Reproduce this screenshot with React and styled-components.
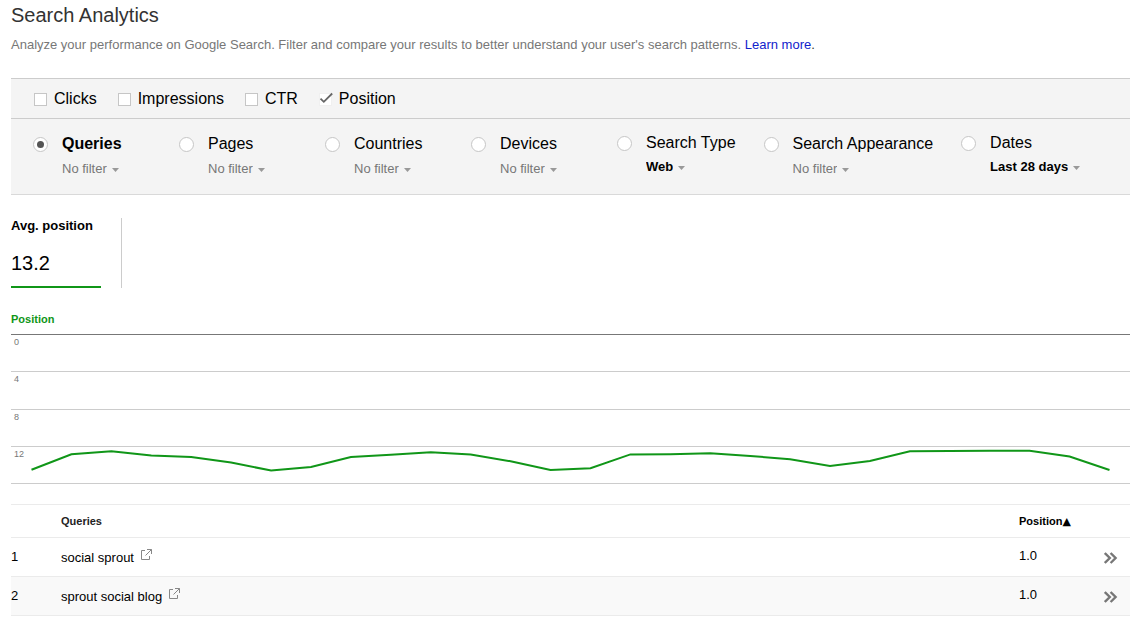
import React from 'react';
import styled, { createGlobalStyle } from 'styled-components';

const GlobalStyles = createGlobalStyle`
    *, *::before, *::after {
        box-sizing: border-box;
    }
    body {
        margin: 0;
        background: #fff;
        color: #000;
        font-family: 'Liberation Sans', Arial, Helvetica, sans-serif;
        font-size: 13px;
    }
    button, input, select {
        margin: 0;
        padding: 0;
        font-family: inherit;
    }
`;

const PageStyles = styled.main`
    padding: 3px 10px 9px 11px;
`;

const Title = styled.h1`
    margin: 0;
    color: #333;
    font-size: 20px;
    font-weight: normal;
    line-height: 24px;
`;

const Intro = styled.p`
    margin: 10px 0 25px;
    color: #777;
    line-height: 16px;
    a {
        color: #12c;
        text-decoration: none;
    }
    span {
        color: #333;
    }
`;

const FilterPanel = styled.form`
    background: #f4f4f4;
    border-top: 1px solid #ccc;
    border-bottom: 1px solid #d9d9d9;
`;

const MetricRow = styled.div`
    display: flex;
    flex-wrap: wrap;
    column-gap: 21px;
    padding: 10px 23px 9px;
    border-bottom: 1px solid #ccc;
`;

const MetricLabel = styled.label`
    display: flex;
    align-items: center;
    gap: 7px;
    font-size: 16px;
    line-height: 20px;
`;

const CheckWrap = styled.span`
    display: grid;
    input {
        grid-area: 1 / 1;
        appearance: none;
        width: 13px;
        height: 13px;
        background: #fff;
        border: 1px solid #c6c6c6;
    }
    input:checked {
        border-color: #f0f0f0;
    }
    svg {
        grid-area: 1 / 1;
        visibility: hidden;
        overflow: visible;
        pointer-events: none;
    }
    input:checked + svg {
        visibility: visible;
    }
`;

const DimensionRow = styled.div`
    display: flex;
    flex-wrap: wrap;
    min-height: 75px;
    padding: 0 0 16px 22px;
`;

const Dimension = styled.div`
    display: grid;
    grid-template-columns: 15px auto;
    justify-content: start;
    align-content: start;
    align-items: center;
    column-gap: 14px;
    row-gap: ${props => (props.$filtered ? '6px' : '7px')};
    min-width: 146px;
    padding-top: ${props => (props.$filtered ? '14px' : '15px')};
    padding-right: 28px;
    label {
        font-size: 16px;
        line-height: 20px;
        white-space: nowrap;
    }
    input:checked + label {
        font-weight: bold;
    }
`;

const Radio = styled.input`
    appearance: none;
    display: grid;
    place-items: center;
    width: 15px;
    height: 15px;
    background: #fff;
    border: 1px solid #c6c6c6;
    border-radius: 50%;
    &:checked::before {
        content: '';
        width: 7px;
        height: 7px;
        border-radius: 50%;
        background: #555;
    }
`;

const FilterSelect = styled.span`
    grid-column: 2;
    justify-self: start;
    display: grid;
    align-items: center;
    select {
        grid-area: 1 / 1;
        appearance: none;
        field-sizing: content;
        height: 16px;
        padding-right: 12px;
        background: none;
        border: 0;
        color: ${props => (props.$filtered ? '#000' : '#777')};
        font-size: 13px;
        font-weight: ${props => (props.$filtered ? 'bold' : 'normal')};
        line-height: 16px;
    }
    svg {
        grid-area: 1 / 1;
        justify-self: end;
        margin-top: 2px;
        pointer-events: none;
    }
`;

const Summary = styled.section`
    display: inline-block;
    margin-top: 23px;
    padding-right: 20px;
    border-right: 1px solid #ccc;
    h2 {
        margin: 0;
        font-size: 13px;
        line-height: 16px;
    }
    p {
        width: 90px;
        margin: 0;
        padding: 18px 0 12px;
        border-bottom: 2px solid #109618;
        font-size: 20px;
        line-height: 22px;
    }
`;

const ChartTitle = styled.h2`
    margin: 24px 0 8px;
    color: #109618;
    font-size: 11px;
    line-height: 14px;
`;

const Chart = styled.div`
    position: relative;
    display: flex;
    flex-direction: column;
    height: 150px;
    border-bottom: 1px solid #ccc;
    svg {
        position: absolute;
        inset: 0;
        width: 100%;
        height: 100%;
        overflow: visible;
    }
`;

const Band = styled.div`
    flex: 1 0 0;
    padding: 1px 3px 0;
    border-top: 1px solid #ccc;
    color: #777;
    font-size: 9px;
    line-height: 12px;
    &:first-child {
        border-top-color: #777;
    }
`;

const QueryTable = styled.table`
    width: 100%;
    margin-top: 20px;
    border-collapse: separate;
    border-spacing: 0;
    border-top: 1px solid #ebebeb;
    table-layout: fixed;
    th, td {
        padding: 0;
        border-bottom: 1px solid #ebebeb;
        text-align: left;
        line-height: 16px;
    }
    th {
        height: 33px;
        color: #222;
        font-size: 11px;
    }
    td {
        height: 39px;
    }
    tbody tr:nth-child(even) {
        background: #f9f9f9;
    }
    .rank {
        width: 50px;
    }
    .position {
        width: 85px;
    }
    .open {
        width: 26px;
    }
    td.position {
        padding-bottom: 2px;
    }
`;

const SortButton = styled.button`
    display: block;
    background: none;
    border: 0;
    color: #000;
    font-size: 11px;
    font-weight: bold;
    line-height: 16px;
    white-space: nowrap;
    span {
        font-family: 'DejaVu Sans', sans-serif;
        font-weight: normal;
        line-height: 1;
    }
`;

const IconLink = styled.a`
    display: inline-block;
    margin-left: 7px;
    vertical-align: 2px;
    line-height: 0;
`;

const OpenButton = styled.button`
    display: block;
    height: 14px;
    margin-top: 2px;
    background: none;
    border: 0;
    svg {
        display: block;
    }
`;

const metrics = [
    { name: 'Clicks' },
    { name: 'Impressions' },
    { name: 'CTR' },
    { name: 'Position', checked: true },
];

const dimensions = [
    { name: 'Queries', filter: 'No filter', checked: true },
    { name: 'Pages', filter: 'No filter' },
    { name: 'Countries', filter: 'No filter' },
    { name: 'Devices', filter: 'No filter' },
    { name: 'Search Type', filter: 'Web', filtered: true },
    { name: 'Search Appearance', filter: 'No filter' },
    { name: 'Dates', filter: 'Last 28 days', filtered: true },
];

const queries = [
    { query: 'social sprout', position: '1.0' },
    { query: 'sprout social blog', position: '1.0' },
];

// average position for each of the last 28 days
const positions = [
    14.58, 12.92, 12.6, 13.06, 13.21, 13.8, 14.67, 14.28, 13.21, 12.97,
    12.69, 12.94, 13.67, 14.61, 14.41, 12.93, 12.91, 12.8, 13.1, 13.44,
    14.17, 13.64, 12.58, 12.57, 12.54, 12.53, 13.15, 14.6,
];

const axisLabels = [0, 4, 8, 12];
const axisMax = 16;

function PositionChart() {
    const points = positions
        .map((value, i) => {
            const x = 20.5 + (i * 1078) / (positions.length - 1);
            return `${x.toFixed(1)},${((value / axisMax) * 149).toFixed(1)}`;
        })
        .join(' ');

    return (
        <Chart>
            {axisLabels.map(label => (
                <Band key={label}>{label}</Band>
            ))}
            <svg viewBox='0 0 1119 149' preserveAspectRatio='none' role='img' aria-label='Position'>
                <polyline
                    points={points}
                    fill='none'
                    stroke='#109618'
                    strokeWidth='2'
                    vectorEffect='non-scaling-stroke'
                />
            </svg>
        </Chart>
    );
}

export default function App() {
    return (
        <>
            <GlobalStyles />
            <PageStyles>
                <Title>Search Analytics</Title>
                <Intro>
                    Analyze your performance on Google Search. Filter and compare your results to better understand
                    your user's search patterns. <a href='#learn'>Learn more</a><span>.</span>
                </Intro>
                <FilterPanel>
                    <MetricRow>
                        {metrics.map(({ name, checked }) => (
                            <MetricLabel key={name}>
                                <CheckWrap>
                                    <input type='checkbox' defaultChecked={checked} />
                                    <svg width='13' height='13' viewBox='0 0 13 13'>
                                        <path d='M1.5 5.7 4.8 8.8 13.2.5' fill='none' stroke='#666' strokeWidth='1.8' />
                                    </svg>
                                </CheckWrap>
                                {name}
                            </MetricLabel>
                        ))}
                    </MetricRow>
                    <DimensionRow>
                        {dimensions.map(({ name, filter, checked, filtered }, i) => (
                            <Dimension key={name} $filtered={filtered}>
                                <Radio type='radio' name='dimension' id={`dimension-${i}`} defaultChecked={checked} />
                                <label htmlFor={`dimension-${i}`}>{name}</label>
                                <FilterSelect $filtered={filtered}>
                                    <select aria-label={`${name} filter`}>
                                        <option>{filter}</option>
                                    </select>
                                    <svg width='7' height='4' viewBox='0 0 7 4'>
                                        <path d='M0 0h7L3.5 4z' fill='#999' />
                                    </svg>
                                </FilterSelect>
                            </Dimension>
                        ))}
                    </DimensionRow>
                </FilterPanel>
                <Summary>
                    <h2>Avg. position</h2>
                    <p>13.2</p>
                </Summary>
                <ChartTitle>Position</ChartTitle>
                <PositionChart />
                <QueryTable>
                    <thead>
                        <tr>
                            <th className='rank' />
                            <th>Queries</th>
                            <th className='position'>
                                <SortButton type='button'>Position<span>▲</span></SortButton>
                            </th>
                            <th className='open' />
                        </tr>
                    </thead>
                    <tbody>
                        {queries.map(({ query, position }, i) => (
                            <tr key={query}>
                                <td className='rank'>{i + 1}</td>
                                <td>
                                    {query}
                                    <IconLink href='#search' aria-label={`Search for ${query}`}>
                                        <svg width='11' height='11' viewBox='0 0 11 11' fill='none' stroke='#888'>
                                            <path d='M4 1.5H.5v9h8V7M6 .5h4.5V5M10.5.5 4.5 6.5' />
                                        </svg>
                                    </IconLink>
                                </td>
                                <td className='position'>{position}</td>
                                <td className='open'>
                                    <OpenButton type='button' aria-label={`Open ${query}`}>
                                        <svg width='14' height='12' viewBox='0 0 14 12' fill='none' stroke='#777' strokeWidth='2.4'>
                                            <path d='M.8 1l5 5-5 5M6.6 1l5 5-5 5' />
                                        </svg>
                                    </OpenButton>
                                </td>
                            </tr>
                        ))}
                    </tbody>
                </QueryTable>
            </PageStyles>
        </>
    );
}
